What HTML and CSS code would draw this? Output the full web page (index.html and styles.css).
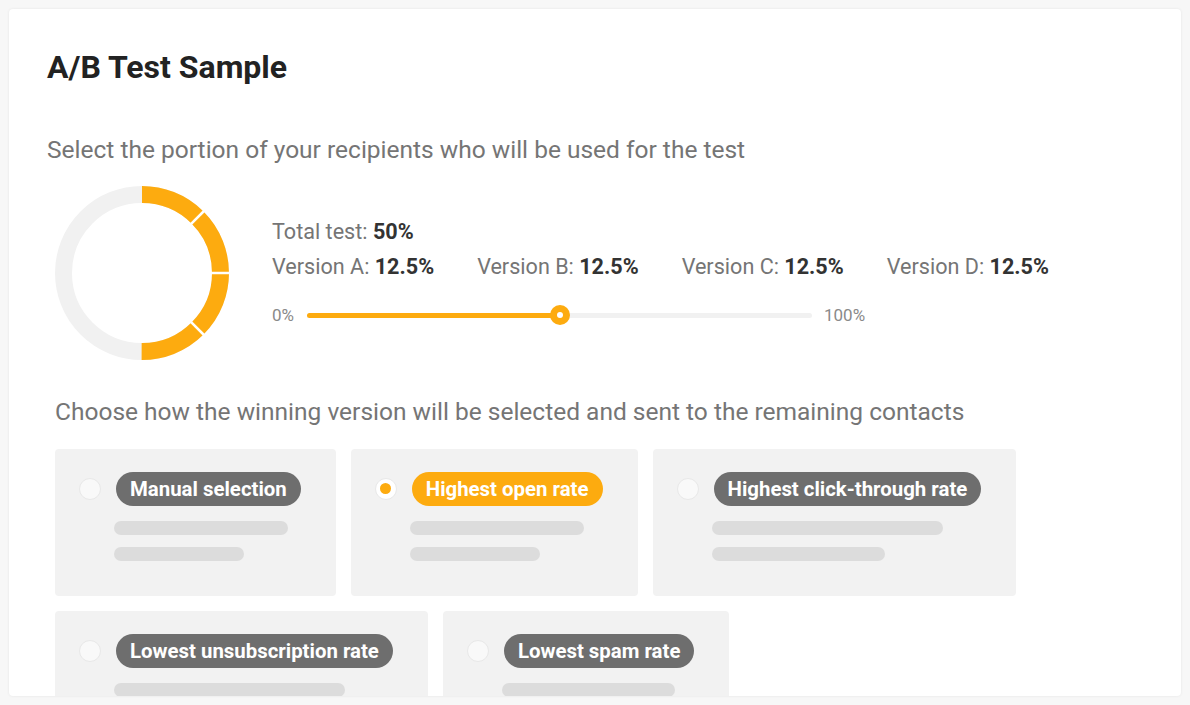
FILE: index.html
```html
<!DOCTYPE html>
<html lang="en">
<head>
<meta charset="utf-8">
<title>A/B Test Sample</title>
<link rel="stylesheet" href="styles.css">
</head>
<body>
<div class="panel">
  <h1 class="title">A/B Test Sample</h1>
  <p class="lead">Select the portion of your recipients who will be used for the test</p>

  <section class="split">
    <svg class="donut" width="174" height="174" viewBox="0 0 174 174" aria-hidden="true">
      <circle cx="87" cy="87" r="78.5" fill="none" stroke="#f1f1f1" stroke-width="17"/>
      <circle cx="87" cy="87" r="78.5" fill="none" stroke="#fdab0f" stroke-width="17" stroke-dasharray="246.6 493.2" transform="rotate(-90 87 87)"/>
      <g stroke="#ffffff" stroke-width="2.5">
        <line x1="134.4" y1="39.6" x2="151" y2="23"/>
        <line x1="154" y1="87" x2="178" y2="87"/>
        <line x1="134.4" y1="134.4" x2="151" y2="151"/>
      </g>
    </svg>
    <div class="stats">
      <div class="stat-line">Total test: <b>50%</b></div>
      <div class="versions">
        <span>Version A: <b>12.5%</b></span>
        <span>Version B: <b>12.5%</b></span>
        <span>Version C: <b>12.5%</b></span>
        <span>Version D: <b>12.5%</b></span>
      </div>
      <div class="slider">
        <span class="slider-label">0%</span>
        <div class="track">
          <div class="fill" style="width:50%"></div>
          <div class="thumb" style="left:50%"></div>
        </div>
        <span class="slider-label">100%</span>
      </div>
    </div>
  </section>

  <p class="lead lead--inset">Choose how the winning version will be selected and sent to the remaining contacts</p>

  <div class="options">
    <div class="option">
      <span class="radio"></span>
      <div class="option-body">
        <span class="pill">Manual selection</span>
        <span class="bar bar-first bar-a"></span>
        <span class="bar bar-b"></span>
      </div>
    </div>
    <div class="option">
      <span class="radio radio--on"></span>
      <div class="option-body">
        <span class="pill pill--on">Highest open rate</span>
        <span class="bar bar-first bar-a"></span>
        <span class="bar bar-b"></span>
      </div>
    </div>
    <div class="option">
      <span class="radio"></span>
      <div class="option-body">
        <span class="pill">Highest click-through rate</span>
        <span class="bar bar-first bar-c"></span>
        <span class="bar bar-d"></span>
      </div>
    </div>
    <div class="option">
      <span class="radio"></span>
      <div class="option-body">
        <span class="pill">Lowest unsubscription rate</span>
        <span class="bar bar-first bar-c"></span>
        <span class="bar bar-d"></span>
      </div>
    </div>
    <div class="option">
      <span class="radio"></span>
      <div class="option-body">
        <span class="pill">Lowest spam rate</span>
        <span class="bar bar-first bar-d"></span>
        <span class="bar bar-b"></span>
      </div>
    </div>
  </div>
</div>
</body>
</html>
```

FILE: styles.css
```css
* { box-sizing: border-box; }

html, body {
  margin: 0;
  height: 100%;
}

body {
  background: #f7f7f7;
  padding: 9px;
  font-family: Roboto, "Liberation Sans", sans-serif;
  color: #757575;
  overflow: hidden;
}

.panel {
  background: #ffffff;
  height: 687px;
  border-radius: 4px;
  box-shadow: 0 0 3px rgba(0, 0, 0, 0.08);
  padding: 39px 38px 0 38px;
  overflow: hidden;
}

.title {
  margin: 0;
  font-size: 32px;
  line-height: 38px;
  font-weight: 700;
  color: #222222;
}

.lead {
  margin: 50px 0 0 0;
  font-size: 24.5px;
  line-height: 28px;
  color: #757575;
}

.lead--inset {
  margin: 38px 0 0 8px;
}

.split {
  display: flex;
  align-items: flex-start;
  margin: 22px 0 0 8px;
}

.donut {
  display: block;
  flex: none;
}

.stats {
  margin-left: 43px;
  padding-top: 32px;
}

.stat-line {
  font-size: 21.6px;
  line-height: 28px;
}

.stat-line b,
.versions b {
  color: #333333;
  font-weight: 700;
}

.versions {
  display: flex;
  gap: 43px;
  font-size: 21.6px;
  line-height: 28px;
  margin-top: 7px;
}

.slider {
  display: flex;
  align-items: center;
  margin-top: 24px;
  height: 20px;
}

.slider-label {
  font-size: 17px;
  color: #8a8a8a;
}

.track {
  position: relative;
  width: 505px;
  height: 5px;
  margin: 0 12px 0 13px;
  background: #f1f1f1;
  border-radius: 3px;
}

.fill {
  height: 100%;
  background: #fdab0f;
  border-radius: 3px;
}

.thumb {
  position: absolute;
  top: 50%;
  width: 20px;
  height: 20px;
  margin: -10px 0 0 -10px;
  border-radius: 50%;
  background: #fdab0f;
}

.thumb::after {
  content: "";
  position: absolute;
  left: 7px;
  top: 7px;
  width: 6px;
  height: 6px;
  border-radius: 50%;
  background: #ffffff;
}

.options {
  display: flex;
  flex-wrap: wrap;
  gap: 15px;
  margin: 23px 0 0 8px;
}

.option {
  display: flex;
  align-items: flex-start;
  background: #f2f2f2;
  border-radius: 4px;
  padding: 23px 35px 35px 24px;
}

.radio {
  flex: none;
  width: 22px;
  height: 22px;
  margin-top: 6px;
  border-radius: 50%;
  background: #f9f9f9;
  border: 1.5px solid #e8e8e8;
  position: relative;
}

.radio--on {
  background: #ffffff;
}

.radio--on::after {
  content: "";
  position: absolute;
  left: 4px;
  top: 4px;
  width: 11px;
  height: 11px;
  border-radius: 50%;
  background: #fdab0f;
}

.option-body {
  display: flex;
  flex-direction: column;
  align-items: flex-start;
  margin-left: 15px;
}

.pill {
  display: block;
  height: 34px;
  line-height: 34px;
  padding: 0 14px;
  border-radius: 17px;
  background: #6e6e6e;
  color: #ffffff;
  font-size: 20.4px;
  font-weight: 700;
  white-space: nowrap;
}

.pill--on {
  background: #fdab0f;
}

.bar {
  display: block;
  height: 14px;
  border-radius: 7px;
  background: #dcdcdc;
  margin-top: 12px;
  margin-left: -2px;
}

.bar-first {
  margin-top: 15px;
}

.bar-a { width: 174px; }
.bar-b { width: 130px; }
.bar-c { width: 231px; }
.bar-d { width: 173px; }
```
